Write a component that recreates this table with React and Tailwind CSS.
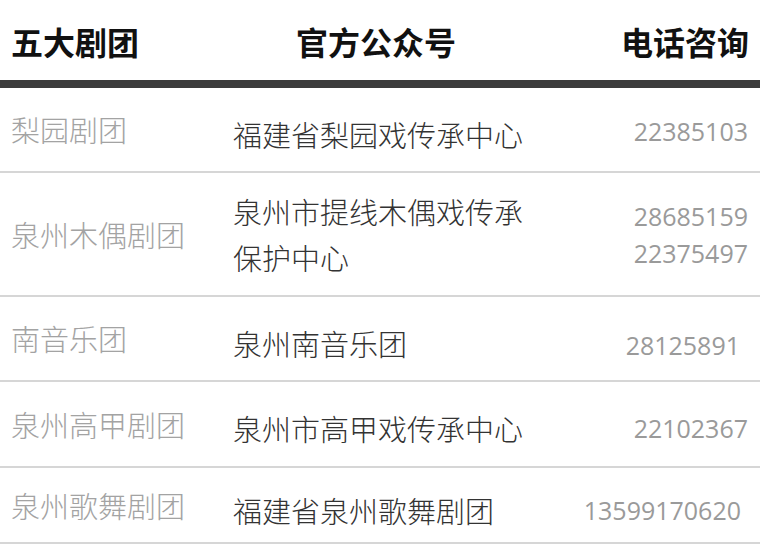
const rows = [
  { name: "梨园剧团", account: ["福建省梨园戏传承中心"], phones: ["22385103"], h: "h-[85px]", pr: "pr-[12px]", mid: "pt-[8px]", tel: "pt-[4px]" },
  { name: "泉州木偶剧团", account: ["泉州市提线木偶戏传承", "保护中心"], phones: ["28685159", "22375497"], h: "h-[124px]", pr: "pr-[12px]", mid: "pt-[0px]", tel: "pt-[2px]" },
  { name: "南音乐团", account: ["泉州南音乐团"], phones: ["28125891"], h: "h-[85px]", pr: "pr-[20px]", mid: "pt-[8px]", tel: "pt-[14px]" },
  { name: "泉州高甲剧团", account: ["泉州市高甲戏传承中心"], phones: ["22102367"], h: "h-[86px]", pr: "pr-[12px]", mid: "pt-[8px]", tel: "pt-[8px]" },
  { name: "泉州歌舞剧团", account: ["福建省泉州歌舞剧团"], phones: ["13599170620"], h: "h-[76px]", pr: "pr-[19px]", mid: "pt-[10px]", tel: "pt-[10px]" },
];

const cjk = { fontFamily: '"Noto Sans CJK SC", "Noto Sans", sans-serif' };

export default function App() {
  return (
    <div className="w-[760px] h-[544px] overflow-hidden bg-white" style={cjk}>
      {/* header */}
      <div className="grid grid-cols-[220px_312px_1fr] items-center h-[80px] pt-[2px] text-[32px] font-bold text-[#111] leading-none">
        <div className="pl-[11px]">五大剧团</div>
        <div className="text-center">官方公众号</div>
        <div className="text-right pr-[11px]">电话咨询</div>
      </div>
      <div className="h-[8px] bg-[#3c3c3c]" />

      {rows.map((r) => (
        <div
          key={r.name}
          className={`grid grid-cols-[220px_312px_1fr] items-center border-b-2 border-[#d6d6d6] ${r.h}`}
        >
          <div className="pl-[11px] text-[29px] font-light leading-none text-[#a3a3a3]">{r.name}</div>
          <div className={`pl-[13px] text-[29px] font-light leading-[46px] text-[#333] ${r.mid}`}>
            {r.account.map((l) => (
              <div key={l}>{l}</div>
            ))}
          </div>
          <div
            className={`text-right text-[25px] leading-[37px] text-[#9a9a9a] ${r.pr} ${r.tel}`}
            style={{ fontFamily: '"Open Sans", sans-serif' }}
          >
            {r.phones.map((p) => (
              <div key={p}>{p}</div>
            ))}
          </div>
        </div>
      ))}
    </div>
  );
}
